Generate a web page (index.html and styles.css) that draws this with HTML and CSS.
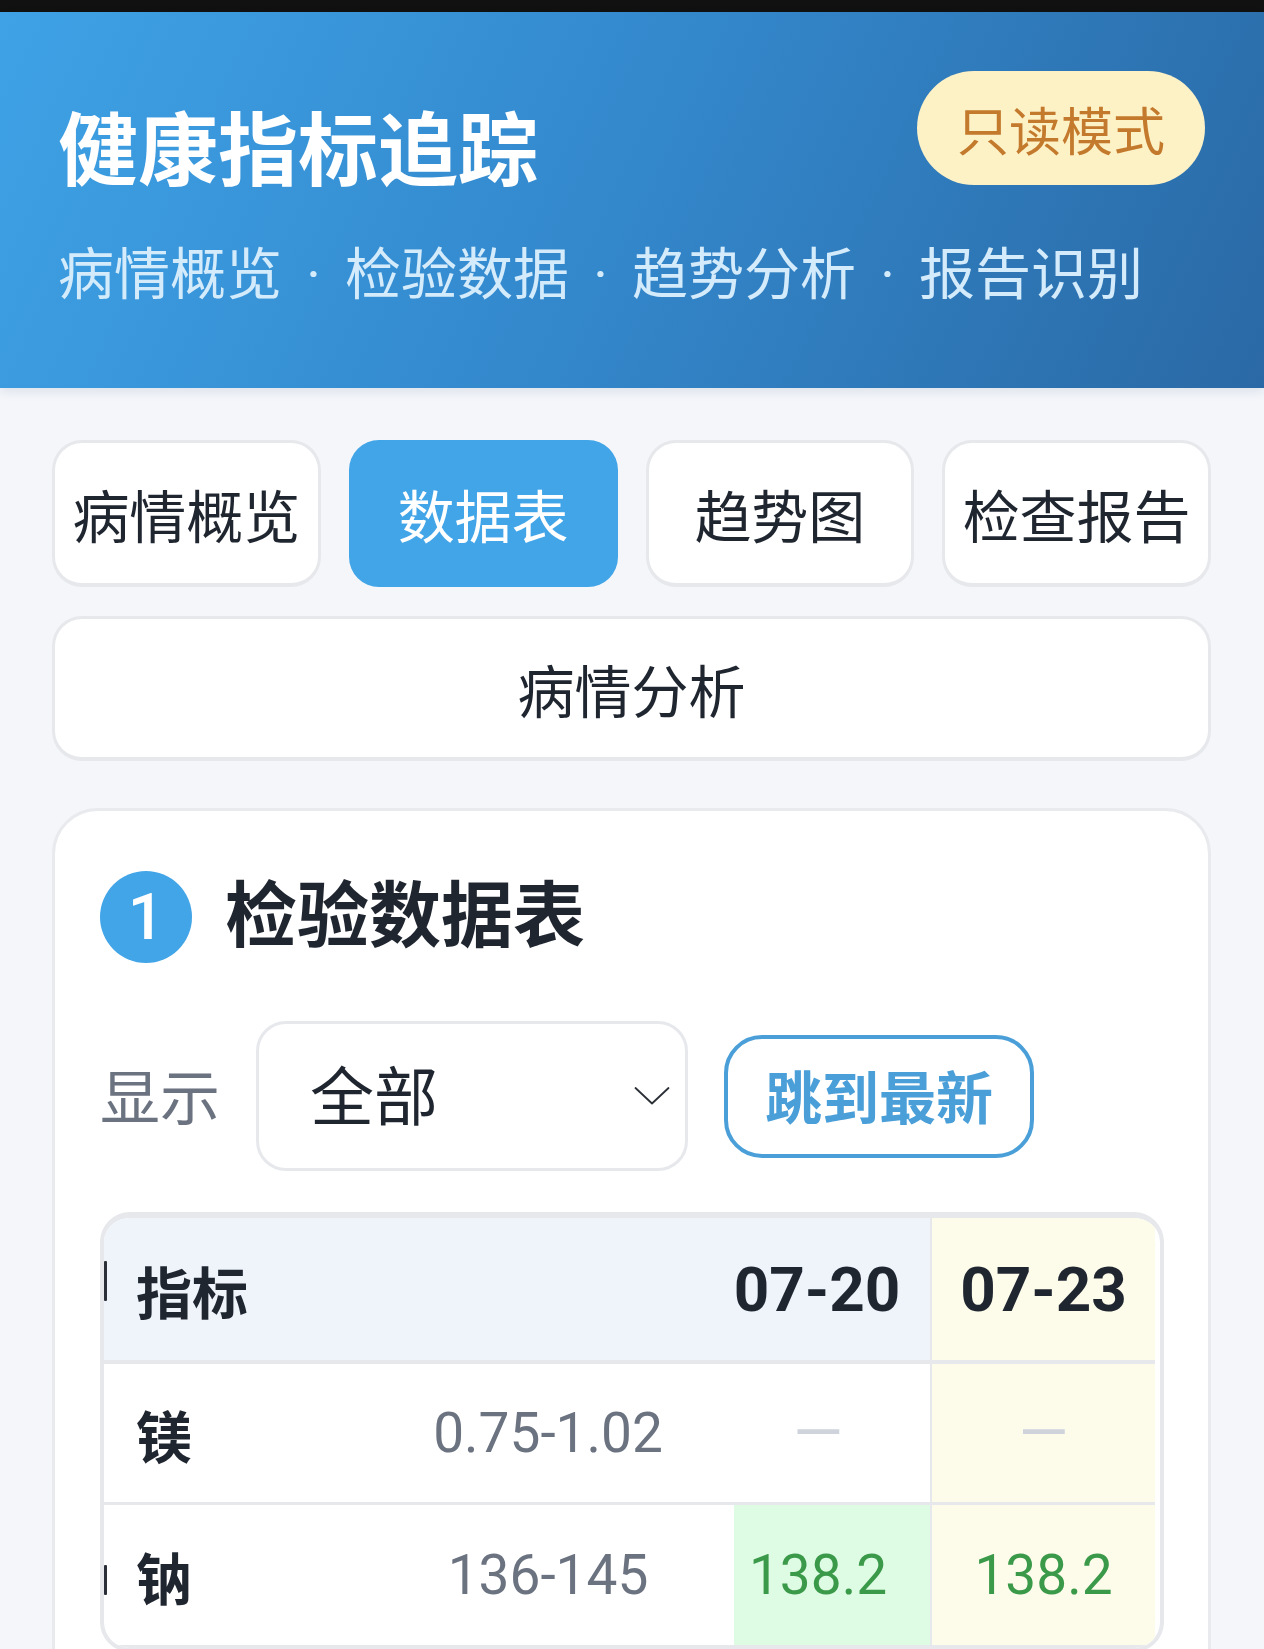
FILE: index.html
```html
<!DOCTYPE html>
<html lang="zh-CN">
<head>
<meta charset="utf-8">
<title>健康指标追踪</title>
<link rel="stylesheet" href="styles.css">
</head>
<body>
<div class="statusbar"></div>
<header class="hero">
  <div class="hero-top">
    <h1 class="hero-title">健康指标追踪</h1>
    <span class="badge">只读模式</span>
  </div>
  <p class="hero-sub">病情概览<span class="sep">·</span>检验数据<span class="sep">·</span>趋势分析<span class="sep">·</span>报告识别</p>
</header>
<main class="main">
  <nav class="tabs">
    <button class="tab">病情概览</button>
    <button class="tab active">数据表</button>
    <button class="tab">趋势图</button>
    <button class="tab">检查报告</button>
    <button class="tab wide">病情分析</button>
  </nav>
  <section class="card">
    <div class="sec-head">
      <span class="num">1</span>
      <h2 class="sec-title">检验数据表</h2>
    </div>
    <div class="controls">
      <span class="ctl-label">显示</span>
      <div class="select">
        <span class="select-val">全部</span>
        <svg class="chev" width="36" height="20" viewBox="0 0 36 20"><path d="M1.5 2 L18 17.5 L34.5 2" fill="none" stroke="#2b2f36" stroke-width="1.8" stroke-linecap="round" stroke-linejoin="round"/></svg>
      </div>
      <button class="jump">跳到最新</button>
    </div>
    <div class="table-wrap">
      <div class="tr thead">
        <div class="td cut"><i class="frag frag-h"></i></div>
        <div class="td name span2">指标</div>
        <div class="td d1">07-20</div>
        <div class="td d2">07-23</div>
      </div>
      <div class="tr">
        <div class="td cut"></div>
        <div class="td name">镁</div>
        <div class="td range">0.75-1.02</div>
        <div class="td d1"><span class="dash">—</span></div>
        <div class="td d2"><span class="dash">—</span></div>
      </div>
      <div class="tr">
        <div class="td cut"><i class="frag frag-b"></i></div>
        <div class="td name">钠</div>
        <div class="td range">136-145</div>
        <div class="td d1 ok"><span class="val">138.2</span></div>
        <div class="td d2"><span class="val">138.2</span></div>
      </div>
    </div>
  </section>
</main>
</body>
</html>
```
FILE: styles.css
```css
* { box-sizing: border-box; }
html, body { margin: 0; padding: 0; }
body {
  background: #f4f6fa;
  font-family: Roboto, "Noto Sans CJK SC", sans-serif;
  color: #1f2630;
}
.statusbar { height: 12px; background: #111; }
.hero {
  height: 376px;
  padding: 0 59px 0 58px;
  background: linear-gradient(115deg, #3fa2e6 0%, #3387cb 50%, #2a69a5 100%);
  box-shadow: 0 4px 10px rgba(30, 60, 100, 0.10);
  position: relative;
}
.hero-top {
  display: flex;
  justify-content: space-between;
  align-items: flex-start;
  padding-top: 59px;
}
.hero-title {
  margin: 33px 0 0;
  font-size: 80px;
  line-height: 1.2;
  font-weight: 700;
  color: #fff;
}
.badge {
  height: 114px;
  padding: 0 40px;
  border-radius: 57px;
  background: #fdf1c6;
  color: #c47a2c;
  font-size: 52px;
  display: flex;
  align-items: center;
}
.hero-sub {
  margin: 42px 0 0;
  font-size: 56px;
  line-height: 1.2;
  color: #d4ebfb;
  white-space: nowrap;
}
.sep { display: inline-block; width: 63px; text-align: center; }

.main { padding: 52px 53px 0 52px; }
.tabs {
  display: grid;
  grid-template-columns: repeat(4, 1fr);
  grid-template-rows: 147px 145px;
  column-gap: 28px;
  row-gap: 29px;
}
.tab {
  margin: 0;
  font-family: inherit;
  font-size: 57px;
  color: #1f2630;
  background: #fff;
  border: 3px solid #e6e8ec;
  border-bottom-width: 4px;
  border-radius: 30px;
  padding: 0;
}
.tab.active {
  background: #42a5e8;
  border-color: #42a5e8;
  color: #fff;
}
.tab.wide { grid-column: 1 / -1; }

.card {
  margin-top: 47px;
  background: #fff;
  border: 3px solid #e8eaee;
  border-radius: 46px;
  padding: 60px 44px 80px 45px;
}
.sec-head { display: flex; align-items: center; gap: 33px; }
.num {
  width: 92px; height: 92px;
  border-radius: 50%;
  background: #42a5e8;
  color: #fff;
  font-size: 64px;
  font-weight: 500;
  display: flex; align-items: center; justify-content: center;
}
.sec-title { margin: 0; font-size: 72px; line-height: 1.2; font-weight: 700; color: #1f2630; }

.controls { display: flex; align-items: center; margin-top: 58px; }
.ctl-label { font-size: 60px; color: #6b7280; margin-right: 36px; margin-top: -6px; }
.select {
  width: 432px; height: 150px;
  border: 3px solid #e6e8ec;
  border-radius: 30px;
  display: flex; align-items: center; justify-content: space-between;
  padding: 0 15px 0 51px;
}
.select-val { font-size: 64px; color: #1f2630; margin-top: -8px; }
.jump {
  margin: 0 0 0 36px;
  width: 310px; height: 123px;
  border: 4px solid #4a9fd8;
  border-radius: 38px;
  background: #fff;
  color: #4a9fd8;
  font-family: inherit;
  font-size: 57px;
  font-weight: 700;
  padding: 0 0 4px;
}

.table-wrap {
  margin-top: 41px;
  border: 4px solid #e6e8ec;
  border-top-width: 6px;
  border-radius: 30px;
  overflow: hidden;
  background: #fff;
}
.tr {
  display: grid;
  grid-template-columns: 6px 252px 372px 196px 225px;
  width: 1051px;
  height: 141px;
  border-bottom: 3px solid #e6e8ec;
}
.tr:last-child { height: 143px; }
.thead { height: 146px; border-bottom-width: 4px; background: #eff4fb; }
.td { display: flex; align-items: center; min-width: 0; white-space: nowrap; }
.cut { justify-content: flex-start; }
.frag { display: block; width: 3px; background: #2a2f38; border-radius: 1px; }
.frag-h { height: 40px; margin-top: -16px; }
.frag-b { height: 30px; margin-top: 10px; }
.name { padding-left: 26px; font-size: 56px; font-weight: 700; }
.span2 { grid-column: span 2; }
.range { justify-content: center; font-size: 55px; color: #6b7280; }
.d1 { justify-content: center; padding-right: 28px; font-size: 55px; }
.d2 { justify-content: center; border-left: 2px solid #e6e8ec; background: #fdfbea; font-size: 55px; }
.thead .d1, .thead .d2 { font-size: 62px; font-weight: 700; color: #1f2630; }
.thead .d1 { padding-right: 30px; }
.ok { background: #defbe4; }
.val { color: #3b9a4a; }
.dash { color: #cfd4dc; font-size: 64px; }
```
